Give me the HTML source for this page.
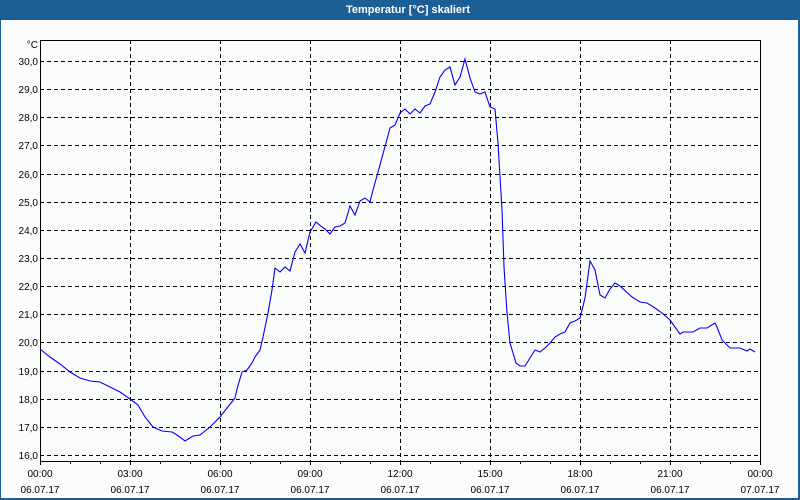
<!DOCTYPE html>
<html><head><meta charset="utf-8"><style>
html,body{margin:0;padding:0;width:800px;height:500px;overflow:hidden;background:#fff;}
svg{display:block}
text{font-family:"Liberation Sans",sans-serif;font-size:10px;fill:#000}
</style></head><body>
<svg width="800" height="500" viewBox="0 0 800 500" xmlns="http://www.w3.org/2000/svg">
<rect x="0" y="0" width="800" height="500" fill="#1c5e96"/>
<rect x="1" y="20" width="797" height="478" fill="#fbfdfc"/>
<text x="408" y="13" text-anchor="middle" style="font-size:11px;font-weight:bold;fill:#fff">Temperatur [°C] skaliert</text>
<g stroke="#000" stroke-width="1" stroke-dasharray="4,3" fill="none">
<path d="M40 61.5H760M40 89.5H760M40 117.5H760M40 145.5H760M40 174.5H760M40 202.5H760M40 230.5H760M40 258.5H760M40 286.5H760M40 314.5H760M40 342.5H760M40 371.5H760M40 399.5H760M40 427.5H760M40 455.5H760"/>
<path d="M130.5 40V461M220.5 40V461M310.5 40V461M400.5 40V461M490.5 40V461M580.5 40V461M670.5 40V461"/>
</g>
<path d="M40.5 40V461.5H760.5V40.5H40" stroke="#000" fill="none"/>
<path d="M40.5 461V465M70.5 461V464M100.5 461V464M130.5 461V465M160.5 461V464M190.5 461V464M220.5 461V465M250.5 461V464M280.5 461V464M310.5 461V465M340.5 461V464M370.5 461V464M400.5 461V465M430.5 461V464M460.5 461V464M490.5 461V465M520.5 461V464M550.5 461V464M580.5 461V465M610.5 461V464M640.5 461V464M670.5 461V465M700.5 461V464M730.5 461V464M760.5 461V465" stroke="#000"/>
<g text-anchor="end">
<text x="38" y="48">°C</text>
<text x="38" y="65">30,0</text><text x="38" y="93">29,0</text><text x="38" y="121">28,0</text><text x="38" y="149">27,0</text><text x="38" y="178">26,0</text><text x="38" y="206">25,0</text><text x="38" y="234">24,0</text><text x="38" y="262">23,0</text><text x="38" y="290">22,0</text><text x="38" y="318">21,0</text><text x="38" y="346">20,0</text><text x="38" y="375">19,0</text><text x="38" y="403">18,0</text><text x="38" y="431">17,0</text><text x="38" y="459">16,0</text>
</g>
<g text-anchor="middle">
<text x="40" y="477">00:00</text><text x="40" y="493">06.07.17</text>
<text x="130" y="477">03:00</text><text x="130" y="493">06.07.17</text>
<text x="220" y="477">06:00</text><text x="220" y="493">06.07.17</text>
<text x="310" y="477">09:00</text><text x="310" y="493">06.07.17</text>
<text x="400" y="477">12:00</text><text x="400" y="493">06.07.17</text>
<text x="490" y="477">15:00</text><text x="490" y="493">06.07.17</text>
<text x="580" y="477">18:00</text><text x="580" y="493">06.07.17</text>
<text x="670" y="477">21:00</text><text x="670" y="493">06.07.17</text>
<text x="760" y="477">00:00</text><text x="760" y="493">07.07.17</text>
</g>
<polyline fill="none" stroke="#0000ff" stroke-width="1.1" points="40,349 50,357 60,364 70,372 80,378 90,381 100,382 110,387 120,392 130,399 138,405 145,417 153,427 162,431 172,432 177,435 185,441 193,436 200,435 210,427 220,417 227,408 235,398 237,389 242,372 247,370 252,363 255,357 260,350 263,337 268,313 272,290 275,268 280,272 285,267 290,271 295,252 300,244 305,253 310,232 316,222 322,227 325,229 330,234 335,227 340,226 345,223 350,206 355,215 360,201 365,198 370,202 373,190 380,165 390,128 395,125 400,113 405,109 410,114 415,109 420,113 425,106 430,104 435,92 440,77 445,70 450,67 455,85 460,77 465,59 470,78 475,92 480,94 485,92 490,107 495,109 498,143 502,210 504,267 507,313 510,343 516,363 520,366 525,366 530,358 535,350 540,352 545,348 550,343 555,337 560,334 565,332 570,323 575,321 580,318 585,298 590,261 595,270 600,295 605,298 610,289 615,283 620,286 632,297 640,302 647,303 655,308 662,313 670,320 675,327 680,334 683,332 693,332 700,328 707,328 715,323 717,327 722,340 730,348 740,348 747,351 750,349 755,352"/>
</svg>
</body></html>
